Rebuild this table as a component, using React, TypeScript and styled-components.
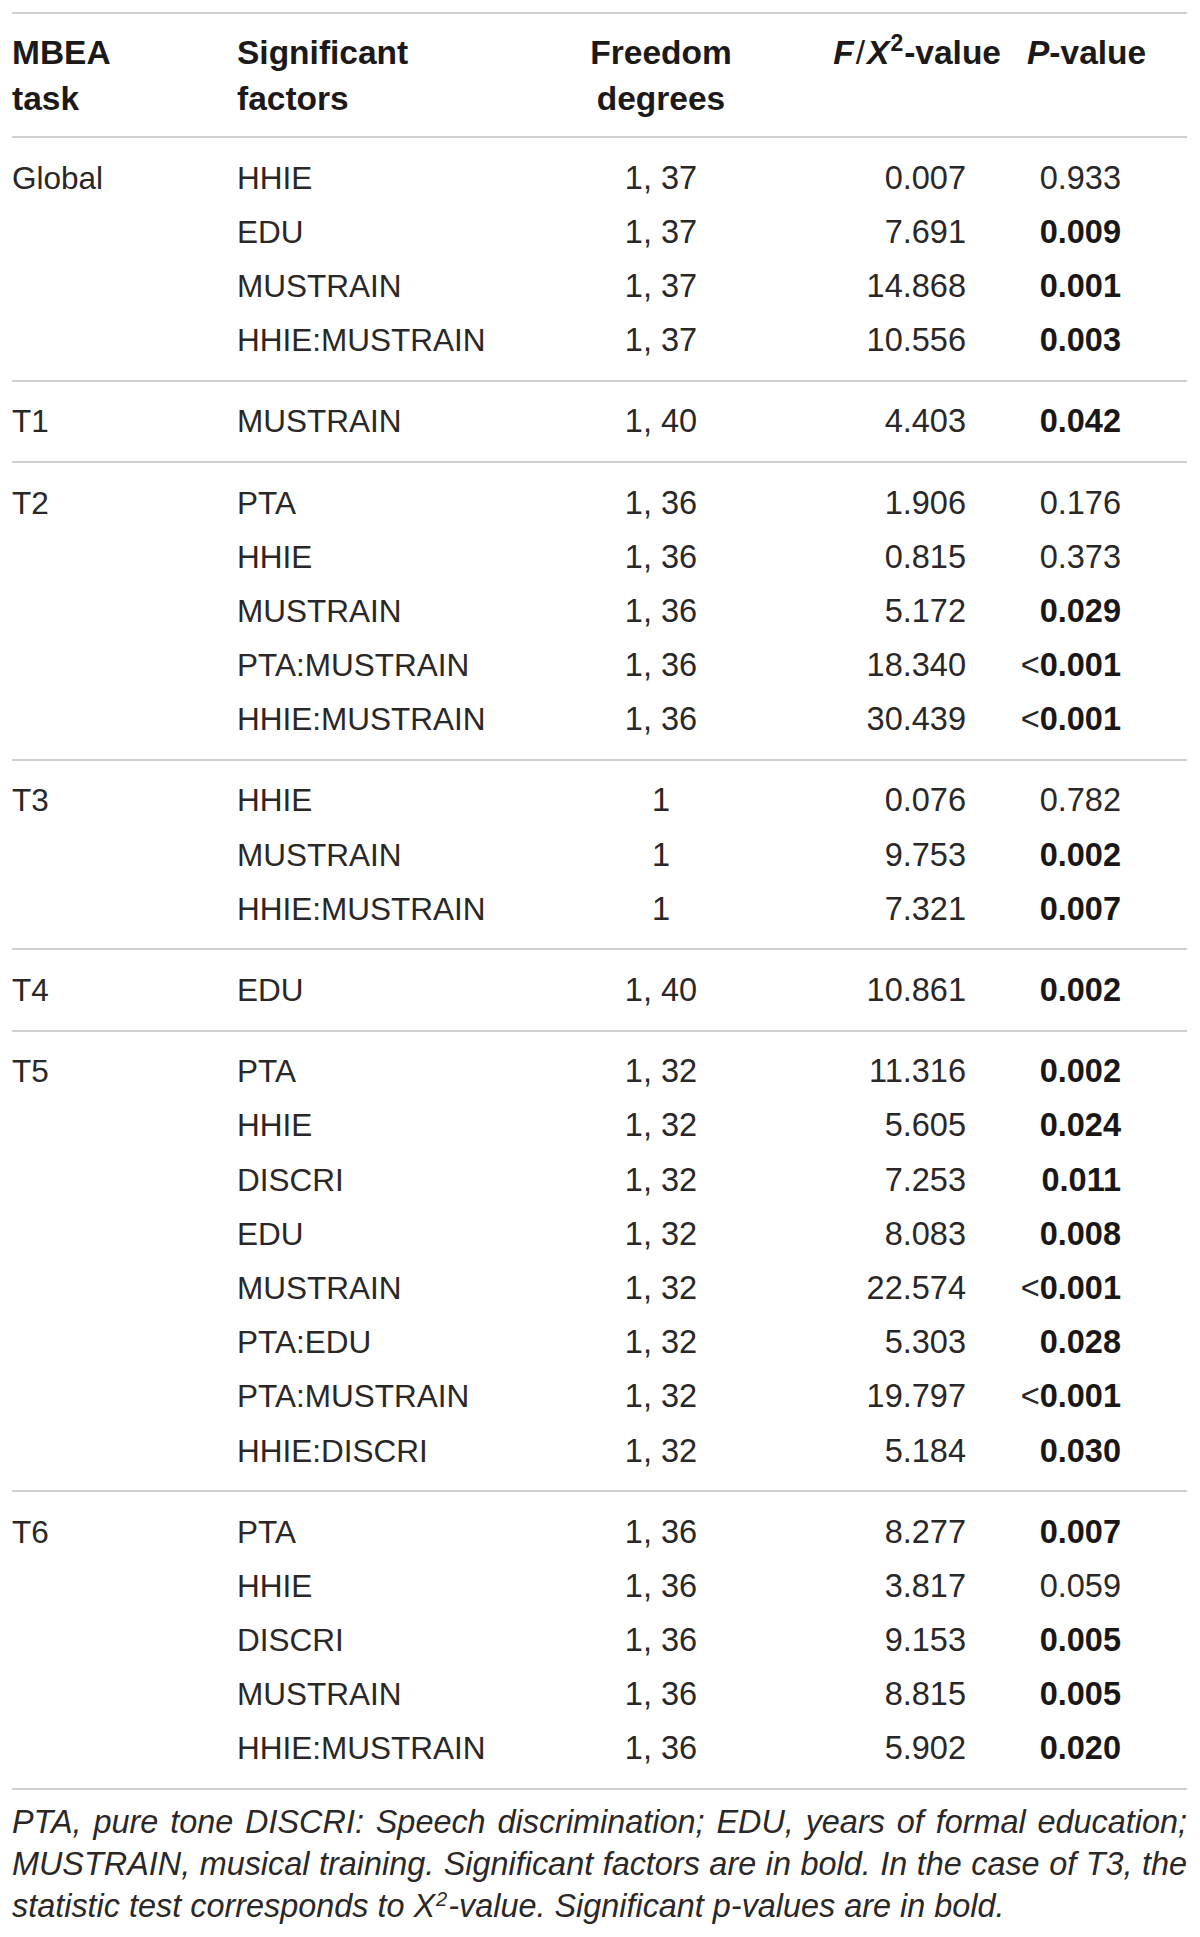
import React, { FC } from 'react';
import styled, { createGlobalStyle } from 'styled-components';

type Align = 'left' | 'center' | 'right';

interface IRow {
  factor: string;
  df: string;
  value: string;
  p: string;
  significant: boolean;
}

interface IGroup {
  task: string;
  rows: IRow[];
}

const row = (factor: string, df: string, value: string, p: string, significant = true): IRow => ({
  factor,
  df,
  value,
  p,
  significant,
});

const GROUPS: IGroup[] = [
  {
    task: 'Global',
    rows: [
      row('HHIE', '1, 37', '0.007', '0.933', false),
      row('EDU', '1, 37', '7.691', '0.009'),
      row('MUSTRAIN', '1, 37', '14.868', '0.001'),
      row('HHIE:MUSTRAIN', '1, 37', '10.556', '0.003'),
    ],
  },
  {
    task: 'T1',
    rows: [row('MUSTRAIN', '1, 40', '4.403', '0.042')],
  },
  {
    task: 'T2',
    rows: [
      row('PTA', '1, 36', '1.906', '0.176', false),
      row('HHIE', '1, 36', '0.815', '0.373', false),
      row('MUSTRAIN', '1, 36', '5.172', '0.029'),
      row('PTA:MUSTRAIN', '1, 36', '18.340', '<0.001'),
      row('HHIE:MUSTRAIN', '1, 36', '30.439', '<0.001'),
    ],
  },
  {
    task: 'T3',
    rows: [
      row('HHIE', '1', '0.076', '0.782', false),
      row('MUSTRAIN', '1', '9.753', '0.002'),
      row('HHIE:MUSTRAIN', '1', '7.321', '0.007'),
    ],
  },
  {
    task: 'T4',
    rows: [row('EDU', '1, 40', '10.861', '0.002')],
  },
  {
    task: 'T5',
    rows: [
      row('PTA', '1, 32', '11.316', '0.002'),
      row('HHIE', '1, 32', '5.605', '0.024'),
      row('DISCRI', '1, 32', '7.253', '0.011'),
      row('EDU', '1, 32', '8.083', '0.008'),
      row('MUSTRAIN', '1, 32', '22.574', '<0.001'),
      row('PTA:EDU', '1, 32', '5.303', '0.028'),
      row('PTA:MUSTRAIN', '1, 32', '19.797', '<0.001'),
      row('HHIE:DISCRI', '1, 32', '5.184', '0.030'),
    ],
  },
  {
    task: 'T6',
    rows: [
      row('PTA', '1, 36', '8.277', '0.007'),
      row('HHIE', '1, 36', '3.817', '0.059', false),
      row('DISCRI', '1, 36', '9.153', '0.005'),
      row('MUSTRAIN', '1, 36', '8.815', '0.005'),
      row('HHIE:MUSTRAIN', '1, 36', '5.902', '0.020'),
    ],
  },
];

const GlobalStyle = createGlobalStyle`
  html, body {
    margin: 0;
    padding: 0;
    background: #ffffff;
  }
  body {
    font-family: "Liberation Sans", Arial, sans-serif;
    color: #2a2728;
  }
`;

const RULE = '2px solid #d0d0d0';
const COLUMNS = '225px 340px 168px 265px 177px';

const Page = styled.div`
  width: 1175px;
  padding: 12px 13px 11px 12px;
`;

const Table = styled.div`
  border-top: ${RULE};
`;

const Head = styled.div`
  display: grid;
  grid-template-columns: ${COLUMNS};
  align-items: start;
  padding: 16px 0 14px;
  border-bottom: ${RULE};
  font-size: 33.5px;
  line-height: 46px;
  font-weight: 700;
  color: #1c191a;
`;

const HeadCell = styled.div<{ $align: Align; $pl?: number; $pr?: number }>`
  text-align: ${(p) => p.$align};
  padding-left: ${(p) => p.$pl ?? 0}px;
  padding-right: ${(p) => p.$pr ?? 0}px;
  white-space: nowrap;
`;

const Slash = styled.span`
  font-weight: 400;
  margin: 0 2px;
`;

const Sup = styled.sup<{ $size?: number; $lift?: number }>`
  font-size: ${(p) => p.$size ?? 23}px;
  line-height: 0;
  vertical-align: ${(p) => p.$lift ?? 13}px;
  margin: 0 1px;
`;

const Group = styled.div`
  padding: 13px 0 12px;
  border-bottom: ${RULE};
`;

const Row = styled.div`
  display: grid;
  grid-template-columns: ${COLUMNS};
  align-items: center;
  height: 54.2px;
`;

const Cell = styled.div<{ $align: Align; $pr?: number; $num?: boolean }>`
  text-align: ${(p) => p.$align};
  padding-right: ${(p) => p.$pr ?? 0}px;
  font-size: ${(p) => (p.$num ? 32.5 : 31.5)}px;
  white-space: nowrap;
`;

const Strong = styled.span`
  font-weight: 700;
  color: #1a1718;
`;

const Note = styled.div`
  padding-top: 11px;
  font-style: italic;
  font-size: 32.4px;
  line-height: 42px;
`;

const NoteLine = styled.span<{ $justify?: boolean }>`
  display: block;
  text-align: ${(p) => (p.$justify ? 'justify' : 'left')};
  text-align-last: ${(p) => (p.$justify ? 'justify' : 'left')};
  white-space: nowrap;
`;

const PValue: FC<{ p: string; significant: boolean }> = ({ p, significant }) => {
  if (!significant) return <>{p}</>;
  if (p.startsWith('<')) {
    return (
      <>
        &lt;
        <Strong>{p.slice(1)}</Strong>
      </>
    );
  }
  return <Strong>{p}</Strong>;
};

const App: FC = () => (
  <Page>
    <GlobalStyle />
    <Table>
      <Head>
        <HeadCell $align="left">
          MBEA
          <br />
          task
        </HeadCell>
        <HeadCell $align="left">
          Significant
          <br />
          factors
        </HeadCell>
        <HeadCell $align="center">
          Freedom
          <br />
          degrees
        </HeadCell>
        <HeadCell $align="right" $pr={9}>
          <i>F</i>
          <Slash>/</Slash>
          <i>X</i>
          <Sup>2</Sup>-value
        </HeadCell>
        <HeadCell $align="left" $pl={17}>
          <i>P</i>-value
        </HeadCell>
      </Head>
      {GROUPS.map((g) => (
        <Group key={g.task}>
          {g.rows.map((r, i) => (
            <Row key={r.factor}>
              <Cell $align="left">{i === 0 ? g.task : ''}</Cell>
              <Cell $align="left">{r.factor}</Cell>
              <Cell $align="center" $num>{r.df}</Cell>
              <Cell $align="right" $pr={44} $num>{r.value}</Cell>
              <Cell $align="right" $pr={66} $num>
                <PValue p={r.p} significant={r.significant} />
              </Cell>
            </Row>
          ))}
        </Group>
      ))}
    </Table>
    <Note>
      <NoteLine $justify>
        PTA, pure tone DISCRI: Speech discrimination; EDU, years of formal education;
      </NoteLine>
      <NoteLine $justify>
        MUSTRAIN, musical training. Significant factors are in bold. In the case of T3, the
      </NoteLine>
      <NoteLine>
        statistic test corresponds to X<Sup $size={20} $lift={11}>2</Sup>-value. Significant p-values are in bold.
      </NoteLine>
    </Note>
  </Page>
);

export default App;
